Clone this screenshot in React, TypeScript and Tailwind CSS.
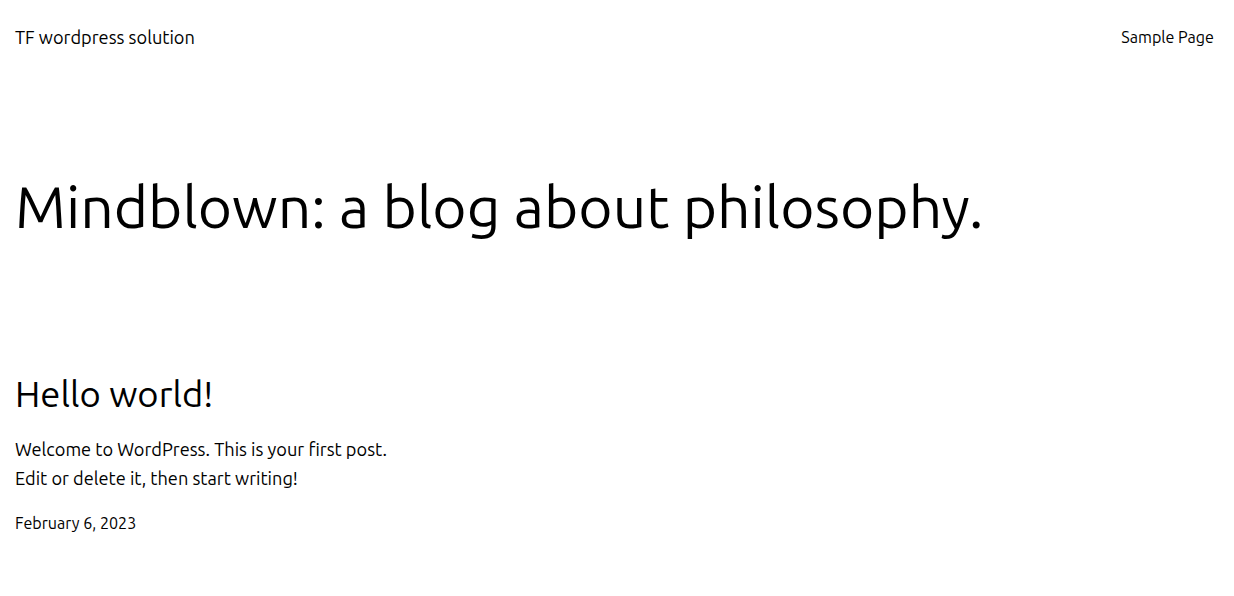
export default function App() {
  return (
    <div
      className="min-h-[596px] bg-white text-black px-[15px]"
      style={{ fontFamily: 'Ubuntu, "Noto Sans", sans-serif' }}
    >
      <header className="flex items-center justify-between pt-[24px] h-[50px]">
        <div className="text-[18.2px] leading-[24px]">TF wordpress solution</div>
        <nav className="text-[16.1px] leading-[24px] pr-[5px]">Sample Page</nav>
      </header>
      <h1 className="mt-[120px] text-[58.7px] leading-[72px] font-normal">
        Mindblown: a blog about philosophy.
      </h1>
      <article className="mt-[130px]">
        <h2 className="text-[36.4px] leading-[44px] font-normal">Hello world!</h2>
        <div className="mt-[19px] text-[18.2px] leading-[29px]">
          <p>Welcome to WordPress. This is your first post.</p>
          <p>Edit or delete it, then start writing!</p>
        </div>
        <div className="mt-[18px] text-[16.1px] leading-[24px]">February 6, 2023</div>
      </article>
    </div>
  );
}
